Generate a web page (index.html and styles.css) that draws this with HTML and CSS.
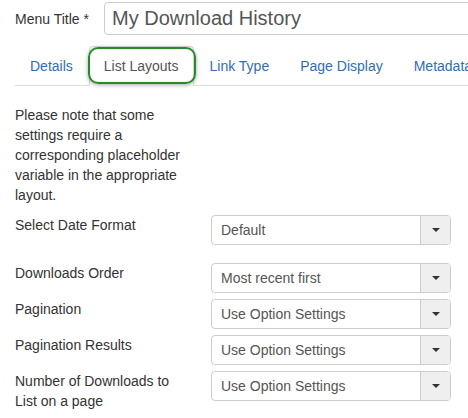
FILE: index.html
```html
<!DOCTYPE html>
<html>
<head>
<meta charset="utf-8">
<link rel="stylesheet" href="styles.css">
</head>
<body>
<div class="title-row">
  <label class="title-label">Menu Title *</label>
  <div class="title-input">My Download History</div>
</div>
<nav class="tabs">
  <a class="tab">Details</a>
  <a class="tab active">List Layouts<span class="highlight"></span></a>
  <a class="tab">Link Type</a>
  <a class="tab">Page Display</a>
  <a class="tab">Metadata</a>
</nav>
<p class="note">Please note that some settings require a corresponding placeholder variable in the appropriate layout.</p>
<div class="form">
  <div class="row first">
    <label class="field-label">Select Date Format</label>
    <div class="select"><span class="select-text">Default</span><span class="select-btn"><i class="caret"></i></span></div>
  </div>
  <div class="row">
    <label class="field-label">Downloads Order</label>
    <div class="select"><span class="select-text">Most recent first</span><span class="select-btn"><i class="caret"></i></span></div>
  </div>
  <div class="row">
    <label class="field-label">Pagination</label>
    <div class="select"><span class="select-text">Use Option Settings</span><span class="select-btn"><i class="caret"></i></span></div>
  </div>
  <div class="row">
    <label class="field-label">Pagination Results</label>
    <div class="select"><span class="select-text">Use Option Settings</span><span class="select-btn"><i class="caret"></i></span></div>
  </div>
  <div class="row">
    <label class="field-label">Number of Downloads to List on a page</label>
    <div class="select"><span class="select-text">Use Option Settings</span><span class="select-btn"><i class="caret"></i></span></div>
  </div>
</div>
</body>
</html>
```
FILE: styles.css
```css
html, body {
  margin: 0;
  padding: 0;
  overflow: hidden;
  background: #fff;
}
body {
  font-family: "Liberation Sans", Arial, sans-serif;
  font-size: 14px;
  line-height: 20px;
  color: #333;
}
.title-row {
  display: flex;
  align-items: center;
  padding: 2px 0 0 15px;
}
.title-label {
  width: 89px;
  flex: none;
}
.title-input {
  flex: none;
  width: 400px;
  height: 33px;
  box-sizing: border-box;
  border: 1px solid #ccc;
  border-radius: 4px;
  padding: 0 7px;
  font-size: 20px;
  line-height: 31px;
  color: #555;
  white-space: nowrap;
}
.tabs {
  display: flex;
  gap: 1px;
  margin: 11px 0 0 15px;
  border-bottom: 1px solid #ddd;
}
.tab {
  position: relative;
  padding: 9px 14px;
  line-height: 20px;
  border: 1px solid transparent;
  border-radius: 4px 4px 0 0;
  margin-bottom: -1px;
  color: #2f6db5;
  white-space: nowrap;
}
.tab.active {
  color: #555;
  background: #fff;
  border-color: #ddd #ddd transparent;
}
.highlight {
  position: absolute;
  left: -2px;
  right: -3px;
  top: 0;
  bottom: 1px;
  border: 2px solid #2a8a2a;
  border-radius: 10px;
  box-shadow: 0 1px 4px rgba(0, 0, 0, 0.35), inset 0 0 2px rgba(0, 0, 0, 0.15);
}
.note {
  width: 175px;
  margin: 19px 0 0 15px;
}
.form {
  margin-top: 10px;
  padding-left: 15px;
}
.row {
  display: grid;
  grid-template-columns: 175px 240px;
  column-gap: 21px;
  align-items: start;
  margin-bottom: 6px;
}
.row.first {
  margin-bottom: 18px;
}
.field-label {
  line-height: 20px;
}
.select {
  display: flex;
  height: 30px;
  box-sizing: border-box;
  border: 1px solid #ccc;
  border-radius: 4px;
  overflow: hidden;
  color: #555;
}
.select-text {
  flex: 1;
  padding-left: 9px;
  line-height: 28px;
  white-space: nowrap;
}
.select-btn {
  flex: none;
  width: 29px;
  border-left: 1px solid #ccc;
  background: #efefef;
  display: flex;
  align-items: center;
  justify-content: center;
}
.caret {
  display: block;
  width: 0;
  height: 0;
  border-top: 4px solid #333;
  border-left: 4px solid transparent;
  border-right: 4px solid transparent;
}
```
